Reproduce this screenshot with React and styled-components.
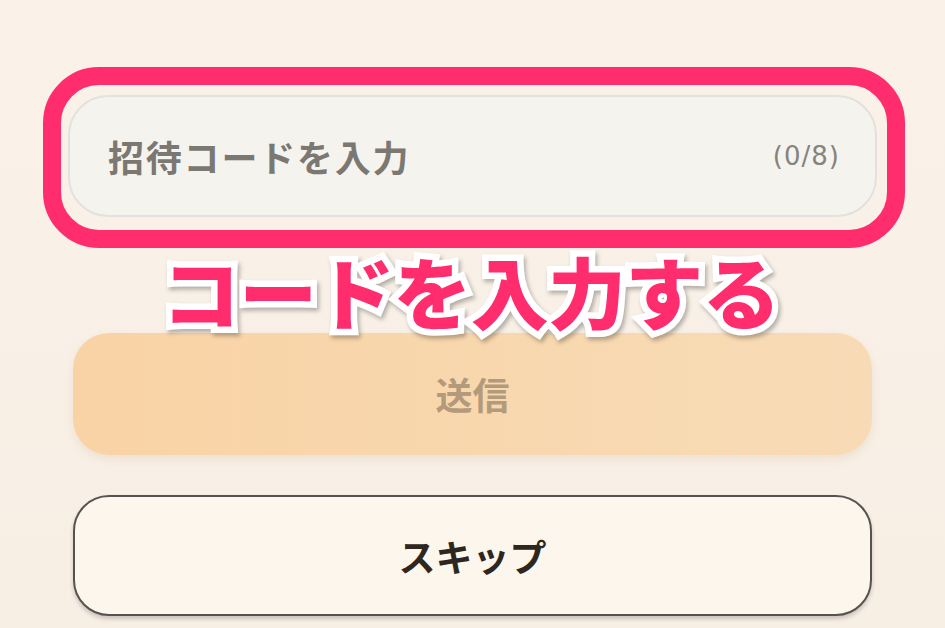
import styled, { createGlobalStyle } from 'styled-components';

const GlobalStyle = createGlobalStyle`
  html, body {
    margin: 0;
    padding: 0;
    background: #f8efe5;
  }
  body {
    font-family: "Noto Sans CJK JP", "Noto Sans", sans-serif;
  }
`;

const Page = styled.div`
  width: 945px;
  height: 628px;
  overflow: hidden;
  background: linear-gradient(180deg, #faf2e9 0%, #f7eee4 100%);
  display: flex;
  flex-direction: column;
  align-items: center;
  padding-top: 95px;
  box-sizing: border-box;
`;

const Field = styled.div`
  position: relative;
  width: 809px;
  height: 122px;
  box-sizing: border-box;
  border: 2px solid #e2e1dd;
  border-radius: 40px;
  background: #f5f3ee;
  display: flex;
  align-items: center;
  justify-content: space-between;
  padding: 0 35px 0 38px;
`;

const Placeholder = styled.span`
  font-size: 36px;
  font-weight: 700;
  color: #7b7873;
  letter-spacing: 1.8px;
`;

const Counter = styled.span`
  font-family: "DejaVu Sans", "Noto Sans", sans-serif;
  font-size: 26px;
  letter-spacing: 1px;
  color: #86837e;
`;

const Highlight = styled.div`
  position: absolute;
  top: -30px;
  left: -27px;
  right: -30px;
  bottom: -33px;
  border: 18px solid #ff2d6d;
  border-radius: 56px;
  pointer-events: none;
`;

const Caption = styled.div`
  position: absolute;
  top: 154px;
  left: 92px;
  font-size: 78px;
  font-weight: 900;
  line-height: 1;
  color: #ff2d6d;
  white-space: nowrap;
  letter-spacing: -0.8px;
  -webkit-text-stroke: 13px #ffffff;
  paint-order: stroke fill;
  filter: drop-shadow(2px 3px 2px rgba(0, 0, 0, 0.28));
  z-index: 2;
`;

const Button = styled.button`
  width: 799px;
  height: ${(p) => (p.$outline ? 121 : 122)}px;
  box-sizing: border-box;
  border-radius: 36px;
  font-family: "Noto Sans CJK JP", "Noto Sans", sans-serif;
  font-size: 37px;
  font-weight: 700;
  display: flex;
  align-items: center;
  justify-content: center;
  padding: 0;
  margin-top: ${(p) => p.$gap}px;
  border: ${(p) => (p.$outline ? '2px solid #575250' : 'none')};
  background: ${(p) =>
    p.$outline ? '#fdf6ec' : 'linear-gradient(90deg, #f9d3a5 0%, #f7dbb6 100%)'};
  color: ${(p) => (p.$outline ? '#2e2620' : '#b39a7b')};
  box-shadow: ${(p) =>
    p.$outline ? '0 3px 4px rgba(0, 0, 0, 0.18)' : '0 4px 8px rgba(190, 150, 110, 0.16)'};
`;

const App = () => (
  <>
    <GlobalStyle />
    <Page>
      <Field>
        <Placeholder>招待コードを入力</Placeholder>
        <Counter>(0/8)</Counter>
        <Highlight />
        <Caption>コードを入力する</Caption>
      </Field>
      <Button $gap={116}>送信</Button>
      <Button $gap={40} $outline>
        スキップ
      </Button>
    </Page>
  </>
);

export default App;
